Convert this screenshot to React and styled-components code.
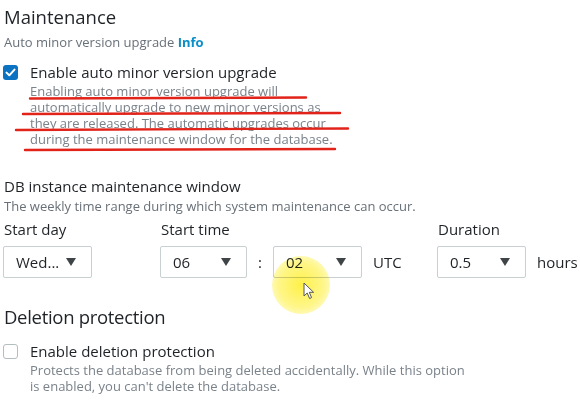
import React from 'react';
import styled, { createGlobalStyle } from 'styled-components';

const GlobalStyle = createGlobalStyle`
  body {
    margin: 0;
    background: #ffffff;
    font-family: 'Open Sans', 'Liberation Sans', sans-serif;
  }
`;

const App = () => {
  return (
    <Page>
      <GlobalStyle />
      <SectionTitle>Maintenance</SectionTitle>
      <Hint>
        Auto minor version upgrade <InfoLink>Info</InfoLink>
      </Hint>

      <CheckRow $top={14}>
        <Checkbox $checked>
          <svg width="15" height="15" viewBox="0 0 15 15">
            <path d="M3.5 7.6 L6.3 10.3 L11.5 4.6" fill="none" stroke="#fff" strokeWidth="2" strokeLinecap="round" strokeLinejoin="round" />
          </svg>
        </Checkbox>
        <CheckText>
          <CheckLabel>Enable auto minor version upgrade</CheckLabel>
          <CheckDesc>
            Enabling auto minor version upgrade will
            <br />
            automatically upgrade to new minor versions as
            <br />
            they are released. The automatic upgrades occur
            <br />
            during the maintenance window for the database.
          </CheckDesc>
        </CheckText>
      </CheckRow>

      <FieldTitle>DB instance maintenance window</FieldTitle>
      <Hint $top={3}>The weekly time range during which system maintenance can occur.</Hint>

      <FieldsRow>
        <Column $width={157}>
          <FieldLabel>Start day</FieldLabel>
          <Select $width={89}>
            <span>Wed...</span>
            <Arrow />
          </Select>
        </Column>
        <Column $width={277}>
          <FieldLabel>Start time</FieldLabel>
          <InlineGroup>
            <Select $width={87}>
              <span>06</span>
              <Arrow />
            </Select>
            <Unit>:</Unit>
            <Select $width={89}>
              <span>02</span>
              <Arrow />
            </Select>
            <Unit>UTC</Unit>
          </InlineGroup>
        </Column>
        <Column>
          <FieldLabel>Duration</FieldLabel>
          <InlineGroup>
            <Select $width={89}>
              <span>0.5</span>
              <Arrow />
            </Select>
            <Unit>hours</Unit>
          </InlineGroup>
        </Column>
      </FieldsRow>

      <SectionTitle $top={26} $tight>Deletion protection</SectionTitle>
      <CheckRow $top={13}>
        <Checkbox />
        <CheckText>
          <CheckLabel>Enable deletion protection</CheckLabel>
          <CheckDesc>
            Protects the database from being deleted accidentally. While this option
            <br />
            is enabled, you can't delete the database.
          </CheckDesc>
        </CheckText>
      </CheckRow>

      <Marks width="580" height="401" viewBox="0 0 580 401">
        <g stroke="#e2231a" strokeWidth="2.4" strokeLinecap="round">
          <line x1="30" y1="98.5" x2="306" y2="97.5" />
          <line x1="23" y1="114" x2="340" y2="113" />
          <line x1="16" y1="130" x2="348" y2="128.5" />
          <line x1="25" y1="150" x2="335" y2="149" />
        </g>
      </Marks>
      <Highlight />
      <Cursor width="14" height="18" viewBox="0 0 14 18">
        <path d="M1 1 L1 14 L4.2 11 L6.6 16.5 L8.6 15.6 L6.3 10.3 L10.6 10.3 Z" fill="#fff" stroke="#555" strokeWidth="1" strokeLinejoin="round" />
      </Cursor>
    </Page>
  );
};

export default App;

const Page = styled.div`
  position: relative;
  width: 580px;
  height: 401px;
  box-sizing: border-box;
  padding: 4px 3px 0 3px;
  overflow: hidden;
  color: #16191f;
`;

const SectionTitle = styled.div`
  font-size: 18.5px;
  line-height: 26px;
  letter-spacing: ${(p) => (p.$tight ? '-0.3px' : '0')};
  margin-top: ${(p) => p.$top || 0}px;
  padding-left: 1px;
  color: #1f2327;
`;

const Hint = styled.div`
  font-size: 13px;
  line-height: 16px;
  margin-top: ${(p) => (p.$top !== undefined ? p.$top : 4)}px;
  padding-left: 1px;
  color: #687078;
`;

const InfoLink = styled.span`
  color: #0a8fc9;
  font-weight: 700;
`;

const CheckRow = styled.div`
  display: flex;
  align-items: flex-start;
  gap: 12px;
  margin-top: ${(p) => p.$top}px;
`;

const Checkbox = styled.div`
  flex: none;
  width: 15px;
  height: 15px;
  margin-top: 1px;
  box-sizing: border-box;
  border-radius: 3px;
  border: ${(p) => (p.$checked ? 'none' : '1px solid #b4bdbf')};
  background: ${(p) => (p.$checked ? '#0b73c1' : '#fff')};
  display: flex;

  svg {
    display: block;
  }
`;

const CheckText = styled.div`
  display: flex;
  flex-direction: column;
`;

const CheckLabel = styled.div`
  font-size: 15px;
  line-height: 16px;
  color: #1f2327;
`;

const CheckDesc = styled.div`
  margin-top: 3px;
  font-size: 13px;
  line-height: 16px;
  color: #7a828a;
  white-space: nowrap;
`;

const FieldTitle = styled.div`
  margin-top: 30px;
  padding-left: 1px;
  font-size: 15px;
  line-height: 18px;
  color: #1f2327;
`;

const FieldsRow = styled.div`
  display: flex;
  margin-top: 6px;
`;

const Column = styled.div`
  display: flex;
  flex-direction: column;
  gap: 8px;
  width: ${(p) => (p.$width ? `${p.$width}px` : 'auto')};
  flex: none;
`;

const FieldLabel = styled.div`
  font-size: 15px;
  line-height: 18px;
  padding-left: 1px;
  color: #1f2327;
`;

const InlineGroup = styled.div`
  display: flex;
  align-items: center;
  gap: 11px;
`;

const Select = styled.div`
  display: flex;
  align-items: center;
  justify-content: space-between;
  box-sizing: border-box;
  width: ${(p) => p.$width}px;
  height: 32px;
  padding: 0 15px 0 12px;
  border: 1px solid #c9d0d2;
  border-radius: 2px;
  background: #fff;
  font-size: 15px;
  color: #1f2327;
`;

const Arrow = styled.span`
  width: 0;
  height: 0;
  border-left: 5px solid transparent;
  border-right: 5px solid transparent;
  border-top: 8px solid #3f4447;
`;

const Unit = styled.span`
  font-size: 15px;
  color: #1f2327;
`;

const Marks = styled.svg`
  position: absolute;
  left: 0;
  top: 0;
  pointer-events: none;
`;

const Highlight = styled.div`
  position: absolute;
  left: 272px;
  top: 256px;
  width: 58px;
  height: 58px;
  border-radius: 50%;
  background: radial-gradient(circle, rgba(255, 238, 40, 0.85) 0%, rgba(255, 240, 60, 0.6) 55%, rgba(255, 245, 120, 0) 100%);
  mix-blend-mode: multiply;
  pointer-events: none;
`;

const Cursor = styled.svg`
  position: absolute;
  left: 303px;
  top: 282px;
`;
